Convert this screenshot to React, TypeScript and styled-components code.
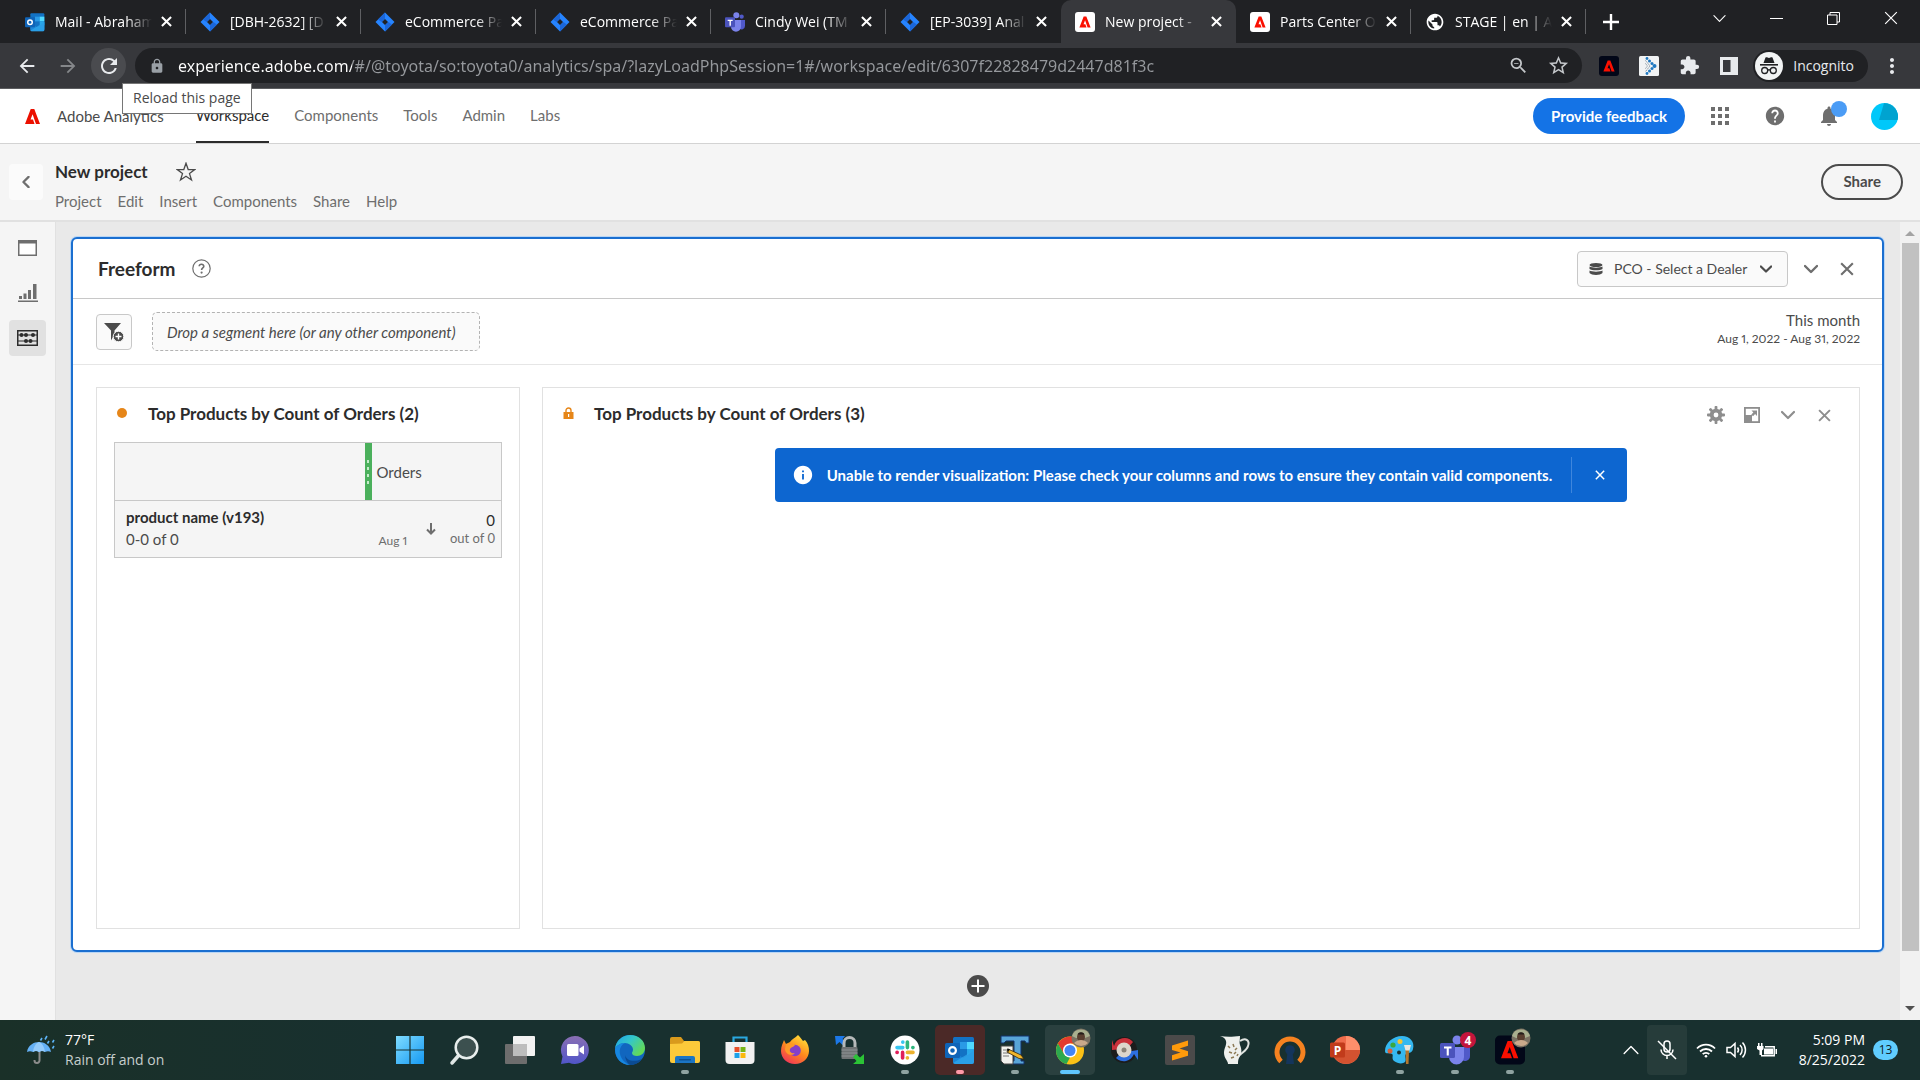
import React from "react";
import styled, { createGlobalStyle, css } from "styled-components";
import {
  MdArrowBack,
  MdArrowForward,
  MdRefresh,
  MdLock,
  MdOutlineZoomOut,
  MdStarBorder,
  MdExtension,
  MdMoreVert,
  MdPublic,
  MdHelp,
  MdNotifications,
  MdInfo,
} from "react-icons/md";

const ui = `"Open Sans", "Noto Sans", sans-serif`;
const brand = `Lato, "Open Sans", sans-serif`;

const GlobalStyle = createGlobalStyle`
  *, *::before, *::after { box-sizing: border-box; }
  body { margin: 0; font-family: ${brand}; color: #2c2c2c; overflow: hidden; }
  button { border: 0; padding: 0; margin: 0; background: none; color: inherit; font: inherit; cursor: pointer; }
  a { color: inherit; text-decoration: none; }
  h1, h2, h3, p, ul { margin: 0; padding: 0; font: inherit; }
  ul { list-style: none; }
  svg { display: block; flex: none; }
`;

const Screen = styled.div`
  display: flex;
  flex-direction: column;
  height: 100vh;
`;

/* ---------- browser chrome ---------- */

const TabStrip = styled.div`
  display: flex;
  align-items: stretch;
  height: 43px;
  padding-left: 11px;
  background: #202124;
  color: #fff;
  font-family: ${ui};
  font-size: 14px;
`;

const Tab = styled.div<{ $active?: boolean; $divider?: boolean }>`
  flex: 0 1 175px;
  min-width: 0;
  display: flex;
  align-items: center;
  padding: 0 12px 0 14px;
  position: relative;
  ${(p) =>
    p.$active &&
    css`
      background: #37383c;
      border-radius: 10px 10px 0 0;
    `}
  &::after {
    content: "";
    display: ${(p) => (p.$divider ? "block" : "none")};
    position: absolute;
    right: 0;
    top: 9px;
    width: 1px;
    height: 25px;
    background: #5f6063;
  }
`;

const TabTitle = styled.a`
  flex: 1;
  min-width: 0;
  margin: 0 4px 0 10px;
  line-height: 20px;
  white-space: nowrap;
  overflow: hidden;
  mask-image: linear-gradient(90deg, #000 calc(100% - 28px), transparent calc(100% - 2px));
`;

const IconButton = styled.button<{ $w?: number; $h?: number; $color?: string }>`
  display: inline-flex;
  align-items: center;
  justify-content: center;
  flex: none;
  width: ${(p) => p.$w ?? 20}px;
  height: ${(p) => p.$h ?? p.$w ?? 20}px;
  color: ${(p) => p.$color ?? "inherit"};
`;

const NewTab = styled(IconButton)`
  margin-left: 11px;
  align-self: center;
`;

const WindowControls = styled.div`
  display: flex;
  margin-left: auto;
  padding-right: 1px;
  align-items: center;
  height: 36px;
`;

const Toolbar = styled.div`
  display: flex;
  align-items: center;
  height: 46px;
  padding: 0 15px 0 9px;
  background: #37383c;
  border-bottom: 1px solid #5c5d60;
  color: #e8eaed;
  font-family: ${ui};
`;

const NavButton = styled(IconButton)<{ $hover?: boolean }>`
  margin-right: 6px;
  border-radius: 50%;
  background: ${(p) => (p.$hover ? "#4a4b4f" : "transparent")};
`;

const AddressBar = styled.div`
  flex: 1;
  display: flex;
  align-items: center;
  height: 35px;
  margin: 0 12px 0 3px;
  padding: 0 10px 0 14px;
  border-radius: 18px;
  background: #202124;
  color: #c4c7ca;
  gap: 13px;
`;

const AddressInput = styled.input`
  flex: 1;
  min-width: 0;
  border: 0;
  padding: 0;
  height: 24px;
  font: 16px "Noto Sans", ${ui};
  color: transparent;
  background: linear-gradient(90deg, #fff 174px, #96999d 174px);
  background-clip: text;
  -webkit-background-clip: text;
`;

const Extensions = styled.div`
  display: flex;
  align-items: center;
  gap: 10px;
`;

const Incognito = styled.button`
  display: flex;
  align-items: center;
  gap: 10px;
  height: 32px;
  margin: 0 11px 0 9px;
  padding: 0 14px 0 2px;
  border-radius: 16px;
  background: #202124;
  font-size: 14px;
`;

const Tooltip = styled.div`
  position: absolute;
  left: 122px;
  top: 83px;
  z-index: 5;
  padding: 4px 10px 5px;
  border: 1px solid #767676;
  background: #fff;
  color: #4a4a4a;
  font: 14px/20px ${ui};
`;

/* ---------- application header ---------- */

const AppHeader = styled.header`
  display: flex;
  align-items: stretch;
  height: 55px;
  padding: 0 22px 0 25px;
  background: #fff;
  border-bottom: 1px solid #d3d3d3;
  font-size: 15px;
`;

const Brand = styled.a`
  display: flex;
  align-items: center;
  gap: 17px;
  margin-right: 32px;
  color: #4b4b4b;
`;

const MainNav = styled.nav`
  display: flex;
  gap: 25px;
`;

const NavLink = styled.a<{ $active?: boolean }>`
  display: flex;
  align-items: center;
  border-bottom: 2px solid ${(p) => (p.$active ? "#2c2c2c" : "transparent")};
  color: ${(p) => (p.$active ? "#2c2c2c" : "#6e6e6e")};
`;

const HeaderActions = styled.div`
  display: flex;
  align-items: center;
  gap: 28px;
  margin-left: auto;
  color: #6e6e6e;
`;

const Feedback = styled.button`
  height: 36px;
  padding: 0 18px;
  margin-right: -7px;
  border-radius: 18px;
  background: #1473e6;
  color: #fff;
  font-weight: 700;
`;

const BellButton = styled(IconButton)`
  position: relative;
  &::after {
    content: "";
    position: absolute;
    left: 15px;
    top: -2px;
    width: 16px;
    height: 16px;
    border-radius: 50%;
    background: #4b9cf5;
  }
`;

const ProjectBar = styled.div`
  display: flex;
  align-items: center;
  height: 78px;
  padding: 0 17px 0 9px;
  background: #f5f5f5;
  border-bottom: 2px solid #e1e1e1;
`;

const BackButton = styled(IconButton)`
  border-radius: 4px;
  background: #fbfbfb;
`;

const ProjectInfo = styled.div`
  display: flex;
  flex-direction: column;
  gap: 8px;
  margin-left: 12px;
  padding-top: 8px;
`;

const ProjectTitle = styled.div`
  display: flex;
  align-items: center;
  gap: 28px;
  h1 { font-size: 17px; line-height: 22px; font-weight: 700; }
`;

const ProjectMenu = styled.nav`
  display: flex;
  gap: 16px;
  font-size: 15px;
  line-height: 20px;
  color: #6e6e6e;
`;

const ShareButton = styled.button`
  height: 36px;
  padding: 0 20px 2px;
  margin-left: auto;
  border: 2px solid #4b4b4b;
  border-radius: 18px;
  color: #4b4b4b;
  font-size: 15px;
  font-weight: 700;
`;

/* ---------- workspace ---------- */

const Workspace = styled.div`
  flex: 1;
  min-height: 0;
  display: flex;
`;

const Rail = styled.aside`
  flex: none;
  width: 56px;
  padding: 8px 9px 0;
  display: flex;
  flex-direction: column;
  gap: 9px;
  background: #f5f5f5;
  border-right: 1px solid #e1e1e1;
  color: #6e6e6e;
`;

const RailButton = styled(IconButton)<{ $active?: boolean }>`
  border-radius: 4px;
  background: ${(p) => (p.$active ? "#e1e1e1" : "transparent")};
`;

const Canvas = styled.main`
  flex: 1;
  min-width: 0;
  display: flex;
  flex-direction: column;
  padding: 15px 16px 0 15px;
  background: #e9e9e9;
`;

const Panel = styled.section`
  flex: 1;
  min-height: 0;
  display: flex;
  flex-direction: column;
  border: 2px solid #1b6fd0;
  border-radius: 6px;
  background: #fff;
  box-shadow: 0 0 0 1px #b9d6f5;
`;

const PanelHeader = styled.div`
  display: flex;
  align-items: center;
  height: 60px;
  padding: 0 25px;
  border-bottom: 1px solid #c8c8c8;
  h2 { font-size: 19px; font-weight: 700; margin-right: 16px; }
`;

const HeaderControls = styled.div`
  display: flex;
  align-items: center;
  gap: 16px;
  margin-left: auto;
  color: #6e6e6e;
`;

const SuitePicker = styled.label`
  display: flex;
  align-items: center;
  height: 36px;
  margin-right: -3px;
  padding: 0 15px 0 11px;
  border: 1px solid #c8c8c8;
  border-radius: 4px;
  background: #fafafa;
  color: #4b4b4b;
  select {
    appearance: none;
    border: 0;
    width: 146px;
    margin-left: 11px;
    padding: 0;
    background: transparent;
    color: inherit;
    font: 14px ${brand};
  }
`;

const SegmentRow = styled.div`
  display: flex;
  align-items: center;
  gap: 20px;
  height: 66px;
  padding: 0 22px 0 23px;
  border-bottom: 1px solid #e6e6e6;
`;

const FilterButton = styled(IconButton)`
  border: 1px solid #c8c8c8;
  border-radius: 4px;
  background: #fafafa;
`;

const DropZone = styled.div`
  display: flex;
  align-items: center;
  height: 39px;
  padding: 0 23px 0 14px;
  border: 1px dashed #b3b3b3;
  border-radius: 5px;
  background: #fafafa;
  color: #4b4b4b;
  font-size: 15px;
  font-style: italic;
`;

const DateRange = styled.button`
  margin-left: auto;
  padding-bottom: 6px;
  text-align: right;
  color: #4b4b4b;
  font-size: 15px;
  line-height: 20px;
  small {
    display: block;
    font-size: 12px;
    line-height: 18px;
    font-variant-numeric: proportional-nums;
  }
`;

const Cards = styled.div`
  flex: 1;
  min-height: 0;
  display: grid;
  grid-template-columns: 424px minmax(0, 1fr);
  gap: 22px;
  padding: 22px 22px 21px 23px;
`;

const Card = styled.article`
  display: flex;
  flex-direction: column;
  border: 1px solid #e1e1e1;
  background: #fff;
`;

const CardHeader = styled.div`
  display: flex;
  align-items: center;
  height: 54px;
  padding: 0 25px 4px 20px;
  h3 { margin-left: 20px; font-size: 17px; font-weight: 700; }
`;

const Dot = styled.span`
  width: 10px;
  height: 10px;
  margin-right: 1px;
  border-radius: 50%;
  background: #e68619;
`;

const CardTools = styled.div`
  display: flex;
  align-items: center;
  gap: 16px;
  margin-left: auto;
  padding-top: 4px;
  color: #8e8e8e;
`;

const DataTable = styled.table`
  width: 388px;
  margin: 0 17px;
  border-collapse: collapse;
  table-layout: fixed;
  background: #f5f5f5;
  color: #4b4b4b;
  font-size: 15px;
  border: 1px solid #c8c8c8;
  tr + tr { border-top: 1px solid #c8c8c8; }
  th, td { height: 57px; padding: 0; text-align: left; font-weight: 400; }
`;

const OrdersHead = styled.div`
  display: flex;
  align-items: center;
  height: 57px;
  gap: 5px;
`;

const ResizeHandle = styled.span`
  display: flex;
  flex-direction: column;
  align-items: center;
  justify-content: center;
  gap: 4px;
  width: 7px;
  height: 100%;
  background: #4bb05c;
  i { width: 2px; height: 3px; background: #c5ecca; }
`;

const DimensionName = styled.div`
  padding: 0 0 2px 11px;
  line-height: 22px;
  strong { display: block; color: #2c2c2c; }
`;

const Totals = styled.div`
  display: flex;
  justify-content: space-between;
  align-items: center;
  height: 36px;
  padding: 0 6px 0 14px;
`;

const StartDate = styled.span`
  align-self: flex-end;
  font-size: 12px;
  line-height: 12px;
  color: #6e6e6e;
  font-variant-numeric: proportional-nums;
`;

const TotalValue = styled.span`
  display: flex;
  align-items: center;
  gap: 14px;
  text-align: right;
  line-height: 17px;
  color: #6e6e6e;
  b { display: block; font-weight: 400; color: #2c2c2c; }
  small { font-size: 13px; }
`;

const Banner = styled.div`
  display: flex;
  align-items: center;
  align-self: center;
  height: 54px;
  margin-top: 6px;
  padding-left: 17px;
  border-radius: 4px;
  background: #0d66d0;
  color: #fff;
  font-size: 15px;
  font-weight: 700;
  p { margin: 0 19px 0 13px; }
`;

const BannerClose = styled.button`
  display: flex;
  align-items: center;
  justify-content: center;
  width: 56px;
  height: 36px;
  border-left: 1px solid #3f86dc;
`;

const AddRow = styled.div`
  flex: none;
  display: flex;
  align-items: center;
  justify-content: center;
  height: 68px;
`;

const ScrollTrack = styled.div`
  flex: none;
  display: flex;
  flex-direction: column;
  align-items: center;
  width: 20px;
  padding: 6px 0;
  background: #f1f1f1;
`;

const ScrollThumb = styled.div`
  flex: 707;
  width: 17px;
  margin: 3px 0;
  background: #c1c1c1;
`;

const ScrollRest = styled.div`
  flex: 48;
`;

/* ---------- taskbar ---------- */

const Taskbar = styled.footer`
  flex: none;
  display: grid;
  grid-template-columns: 1fr auto 1fr;
  align-items: center;
  height: 60px;
  background: linear-gradient(90deg, #1a3028, #18302f 20%, #18302f);
  color: #fff;
  font-family: ${ui};
  font-size: 14px;
`;

const Weather = styled.button`
  display: flex;
  align-items: center;
  gap: 9px;
  padding-left: 26px;
  text-align: left;
  line-height: 20px;
  small { display: block; font-size: 14px; color: #c6cecd; }
`;

const Dock = styled.ul`
  display: flex;
  gap: 5px;
`;

const DockButton = styled.button<{ $tone?: "alert" | "active"; $mark?: "run" | "alert" | "active" }>`
  position: relative;
  display: flex;
  align-items: center;
  justify-content: center;
  width: 50px;
  height: 50px;
  border-radius: 5px;
  background: ${(p) => (p.$tone === "alert" ? "#4b2927" : p.$tone === "active" ? "#2a403f" : "transparent")};
  &::after {
    content: "";
    display: ${(p) => (p.$mark ? "block" : "none")};
    position: absolute;
    bottom: 1px;
    width: ${(p) => (p.$mark === "active" ? 20 : 8)}px;
    height: 4px;
    border-radius: 2px;
    background: ${(p) => (p.$mark === "active" ? "#60c8ff" : p.$mark === "alert" ? "#ff9aa8" : "#8fa3a1")};
  }
`;

const Tray = styled.div`
  display: flex;
  align-items: center;
  justify-content: flex-end;
  padding-right: 22px;
`;

const MicButton = styled(IconButton)`
  margin: 0 9px 0 7px;
  border-radius: 4px;
  background: #263c3a;
`;

const TrayIcons = styled.button`
  display: flex;
  align-items: center;
  gap: 10px;
`;

const Clock = styled.button`
  margin: 0 8px 0 21px;
  text-align: right;
  line-height: 20px;
`;

const Notice = styled.span`
  width: 25px;
  height: 20px;
  border-radius: 10px;
  background: #60cdff;
  color: #10201f;
  font-size: 12px;
  line-height: 20px;
  text-align: center;
`;

/* ---------- drawings ---------- */

const Cross = ({ size = 12, w = 2 }: { size?: number; w?: number }) => (
  <svg width={size} height={size} viewBox="0 0 12 12" fill="none" stroke="currentColor" strokeWidth={w}>
    <path d="M1 1l10 10M11 1L1 11" />
  </svg>
);

const Chevron = ({ size = 14, w = 2.4, dir = 0 }: { size?: number; w?: number; dir?: number }) => (
  <svg width={size} height={size} viewBox="0 0 14 14" fill="none" stroke="currentColor" strokeWidth={w}>
    <path d="M1 4l6 6 6-6" transform={`rotate(${dir} 7 7)`} strokeLinecap="round" strokeLinejoin="round" />
  </svg>
);

const A_MARK = "M6.1 0h3.8L16 16h-4.3L8.1 5.6 5.9 11.3h2.6l1.7 4.7H0z";

const AdobeMark = ({ size = 15 }: { size?: number }) => (
  <svg width={size} height={size} viewBox="0 0 16 16">
    <path d={A_MARK} fill="#eb1000" />
  </svg>
);

const AdobeTile = ({ size = 20, bg = "#fff" }: { size?: number; bg?: string }) => (
  <svg width={size} height={size} viewBox="0 0 20 20">
    <rect width="20" height="20" rx="3" fill={bg} />
    <path d={A_MARK} fill="#fa0f00" transform="translate(4.4 4.4) scale(.7)" />
  </svg>
);

const Jira = () => (
  <svg width="20" height="20" viewBox="0 0 20 20">
    <path d="M10 .5L19.5 10 10 19.5.5 10z" fill="#2684ff" />
    <path d="M10 .5v6.2L6.7 10 3 7.5z" fill="#1b66d8" />
    <path d="M10 19.5v-6.2l3.3-3.3 3.7 2.5z" fill="#1b66d8" />
    <path d="M10 7l3 3-3 3-3-3z" fill="#202124" />
  </svg>
);

const Outlook = ({ size = 20 }: { size?: number }) => (
  <svg width={size} height={size} viewBox="0 0 30 30">
    <rect x="8" y="2" width="21" height="25" rx="1.5" fill="#1272c4" />
    <path d="M15 7h7v7h-7z" fill="#2a9ae6" />
    <path d="M22 7h7v7h-7z" fill="#50d9ff" />
    <path d="M22 14h7v6h-7z" fill="#28a8ea" />
    <path d="M8 17l10.5 6L29 15v12a2 2 0 01-2 2H10a2 2 0 01-2-2z" fill="#1a86d8" />
    <path d="M8 28L29 15v12a2 2 0 01-2 2H10z" fill="#35b1f2" opacity=".6" />
    <rect x="0" y="8" width="15" height="15" rx="1.5" fill="#0f64b8" />
    <circle cx="7.5" cy="15.5" r="3.4" fill="none" stroke="#fff" strokeWidth="2.2" />
  </svg>
);

const Teams = ({ size = 20, count }: { size?: number; count?: number }) => (
  <svg width={size} height={size} viewBox="0 0 30 30" overflow="visible">
    <circle cx="25" cy="7" r="3.2" fill="#5059c9" />
    <path d="M21 12h9v9a5 5 0 01-9 3z" fill="#5059c9" />
    <circle cx="17" cy="5" r="4.5" fill="#7b83eb" />
    <path d="M9 12h15v10a7.500 7.500 0 01-15 0z" fill="#7b83eb" />
    <rect x="0" y="8" width="15" height="15" rx="1.5" fill="#4b53bc" />
    <path d="M4 11.500h7.500v2H8.800v7H6.700v-7H4z" fill="#fff" />
    {count ? (
      <>
        <circle cx="28" cy="5" r="8" fill="#c4153c" />
        <text x="28" y="9.500" fontSize="12" fontWeight="700" fill="#fff" textAnchor="middle">{count}</text>
      </>
    ) : null}
  </svg>
);

const ArrowsExtension = () => (
  <svg width="20" height="20" viewBox="0 0 20 20">
    <rect width="20" height="20" rx="1.5" fill="#f1f3f4" />
    <g fill="#1f78c1">
      <circle cx="8" cy="2.500" r="1.400" />
      <circle cx="10.500" cy="5" r="1.500" />
      <circle cx="13" cy="7.500" r="1.500" />
      <circle cx="15.500" cy="10" r="2" />
      <circle cx="13" cy="12.500" r="1.500" />
      <circle cx="10.500" cy="15" r="1.500" />
      <circle cx="8" cy="17.500" r="1.400" />
    </g>
    <path d="M6.500 4.500L11 10l-4.500 5.500M6.500 7.500L8.500 10l-2 2.500" fill="none" stroke="#7b8a96" strokeDasharray="1.500 1" />
  </svg>
);

const IncognitoFace = () => (
  <svg width="28" height="28" viewBox="0 0 28 28">
    <circle cx="14" cy="14" r="14" fill="#f1f3f4" />
    <path d="M10.500 5.500c1.500-.600 2 .4 3.500.4s2-1 3.500-.4L19.500 11h-11z" fill="#202124" />
    <rect x="5" y="12" width="18" height="1.600" fill="#202124" />
    <g fill="none" stroke="#202124" strokeWidth="1.300">
      <circle cx="9.700" cy="18.500" r="3" />
      <circle cx="18.300" cy="18.500" r="3" />
      <path d="M12.700 18.200c.8-.6 1.800-.6 2.600 0" />
    </g>
  </svg>
);

const AppGrid = () => (
  <svg width="18" height="18" viewBox="0 0 18 18" fill="currentColor">
    {[0, 7, 14].map((y) => [0, 7, 14].map((x) => <rect key={`${x}-${y}`} x={x} y={y} width="4" height="4" />))}
  </svg>
);

const Avatar = () => (
  <svg width="27" height="27" viewBox="0 0 27 27">
    <circle cx="13.500" cy="13.500" r="13.500" fill="#00c8fa" />
    <path d="M13 .2A13.500 13.500 0 0126.600 17L8 17z" fill="#00a3d0" />
  </svg>
);

const Star = () => (
  <svg width="20" height="20" viewBox="0 0 20 20" fill="none" stroke="#4b4b4b" strokeWidth="1.300">
    <path d="M10 1.200l2.200 6.300 6.600.1-5.300 4 2 6.400L10 14.200 4.500 18l2-6.400-5.300-4 6.600-.1z" />
  </svg>
);

const PanelIcon = () => (
  <svg width="19" height="16" viewBox="0 0 19 16">
    <rect x=".75" y=".75" width="17.500" height="14.500" fill="#fff" stroke="#6e6e6e" strokeWidth="1.500" />
    <rect width="19" height="3.500" fill="#6e6e6e" />
  </svg>
);

const BarsIcon = () => (
  <svg width="20" height="18" viewBox="0 0 20 18" fill="#6e6e6e">
    <path d="M1 12h3v3H1zM5.500 9.500h3V15h-3zM10 6h3v9h-3zM15 0h3.500v15H15zM0 16.500h20V18H0z" />
  </svg>
);

const AbacusIcon = () => (
  <svg width="21" height="16" viewBox="0 0 21 16" fill="#2c2c2c">
    <rect x=".75" y=".75" width="19.500" height="14.500" fill="none" stroke="#2c2c2c" strokeWidth="1.500" />
    <path d="M0 4.500h21v1H0zM0 10.500h21v1H0z" />
    <circle cx="4.500" cy="5" r="2" />
    <circle cx="9" cy="5" r="2" />
    <circle cx="16" cy="5" r="2" />
    <circle cx="9" cy="11" r="2" />
    <circle cx="13.500" cy="11" r="2" />
  </svg>
);

const HelpOutline = () => (
  <svg width="19" height="19" viewBox="0 0 19 19">
    <circle cx="9.500" cy="9.500" r="8.700" fill="none" stroke="#6e6e6e" strokeWidth="1.200" />
    <path d="M7.200 7.200c.2-2.600 4.700-2.500 4.600.2-.1 1.500-2.200 1.700-2.200 3.600" fill="none" stroke="#6e6e6e" strokeWidth="1.600" />
    <circle cx="9.600" cy="13.600" r="1.100" fill="#6e6e6e" />
  </svg>
);

const DatabaseIcon = () => (
  <svg width="14" height="12" viewBox="0 0 14 12" fill="#4b4b4b">
    <ellipse cx="7" cy="2" rx="6.500" ry="2" />
    <path d="M.5 3.500c2 1.500 11 1.500 13 0V6c-2 1.700-11 1.700-13 0zM.5 7.500c2 1.500 11 1.500 13 0V10c-2 2.500-11 2.500-13 0z" />
  </svg>
);

const FilterAdd = () => (
  <svg width="20" height="20" viewBox="0 0 20 20">
    <path d="M0 1h17l-6.500 7.500V12L7 18.500V8.500z" fill="#4b4b4b" />
    <circle cx="14.500" cy="14.500" r="5.300" fill="#4b4b4b" stroke="#fafafa" />
    <path d="M14.500 11.500v6M11.500 14.500h6" stroke="#fff" strokeWidth="1.400" />
  </svg>
);

const OrangeLock = () => (
  <svg width="11" height="12" viewBox="0 0 11 12">
    <path d="M3 6V3.500a2.500 2.500 0 015 0V6" fill="none" stroke="#e68619" strokeWidth="1.400" />
    <rect x=".5" y="5" width="10" height="7" fill="#e68619" />
    <path d="M5 7h1.200v3H5z" fill="#fff" />
  </svg>
);

const Gear = () => (
  <svg width="18" height="18" viewBox="0 0 18 18">
    <circle cx="9" cy="9" r="4.300" fill="none" stroke="currentColor" strokeWidth="3.800" />
    {[0, 45, 90, 135, 180, 225, 270, 315].map((a) => (
      <rect key={a} x="7.600" y="0" width="2.800" height="4" rx=".8" fill="currentColor" transform={`rotate(${a} 9 9)`} />
    ))}
  </svg>
);

const Expand = () => (
  <svg width="16" height="16" viewBox="0 0 16 16">
    <rect x=".9" y=".9" width="14.200" height="14.200" fill="none" stroke="currentColor" strokeWidth="1.800" />
    <rect x="1" y="8" width="7" height="7" fill="currentColor" />
    <path d="M7.500 3.500H13V9l-1.900-1.900L9 9.200 7.300 7.500l2.100-2.100z" fill="currentColor" />
  </svg>
);

const DownArrow = () => (
  <svg width="10" height="12" viewBox="0 0 10 12" fill="none" stroke="#6e6e6e" strokeWidth="2">
    <path d="M5 0v10.500M1 6.500l4 4 4-4" />
  </svg>
);

const AddCircle = () => (
  <svg width="22" height="22" viewBox="0 0 22 22">
    <circle cx="11" cy="11" r="11" fill="#4b4b4b" />
    <path d="M11 4.500v13M4.500 11h13" stroke="#fff" strokeWidth="2" />
  </svg>
);

const Triangle = ({ up }: { up?: boolean }) => (
  <svg width="10" height="12" viewBox="0 0 10 12">
    <path d={up ? "M0 8l5-5 5 5z" : "M0 4l5 5 5-5z"} fill={up ? "#a3a3a3" : "#505050"} />
  </svg>
);

const Umbrella = () => (
  <svg width="30" height="30" viewBox="0 0 30 30" fill="none">
    <path d="M13 15v10.500a2.500 2.500 0 01-5 0V25" stroke="#8c8c8c" strokeWidth="2" transform="translate(.5 0)" />
    <path d="M1 17C2 10 8 7 13 7s11 3 12 10c-2-1-4-1-6 0-2-1.500-4-1.500-6 0-2-1.500-4-1.500-6 0-2-1-4-1-6 0z" fill="#64b0f5" />
    <path d="M7 17c.5-5 3-9 6-10 3 1 5.500 5 6 10-2-1.500-4-1.500-6 0-2-1.500-4-1.500-6 0z" fill="#94cbfb" />
    <path d="M16 3l-1.500 2.500M21 1l-2 3.500M23 6l-1.500 2.500M28 5l-1.500 2.500M28 11l-1.500 2.500" stroke="#5db4f7" strokeWidth="1.600" />
  </svg>
);

const Face = () => (
  <g transform="translate(22 -7)">
    <circle cx="9" cy="9" r="9.500" fill="#7b7263" />
    <path d="M0 7a9.500 9.500 0 0118 0l-5 2H4z" fill="#a9b08f" />
    <ellipse cx="9" cy="8" rx="4" ry="4.500" fill="#5a3f30" />
    <path d="M2 14c4-4 10-4 14 0a9.500 9.500 0 01-14 0z" fill="#c9a98b" />
    <path d="M5.500 5.500c1-3 6-3 7 0z" fill="#241d1a" />
  </g>
);

const Art = ({ children }: { children: React.ReactNode }) => (
  <svg width="30" height="30" viewBox="0 0 30 30" overflow="visible">
    {children}
  </svg>
);

const StartArt = (
  <Art>
    <defs>
      <linearGradient id="win" x1="0" y1="0" x2="1" y2="1">
        <stop offset="0" stopColor="#7fdcff" />
        <stop offset="1" stopColor="#1599f3" />
      </linearGradient>
    </defs>
    <path d="M1 1h13.400v13.400H1zM15.600 1H29v13.400H15.600zM1 15.600h13.400V29H1zM15.600 15.600H29V29H15.600z" fill="url(#win)" />
  </Art>
);

const SearchArt = (
  <Art>
    <path d="M9 20l-7 8" stroke="#dfe6e5" strokeWidth="3.500" strokeLinecap="round" />
    <circle cx="16.500" cy="12.500" r="10.800" fill="#3c504f" stroke="#e8eeed" strokeWidth="2.500" />
  </Art>
);

const TaskViewArt = (
  <Art>
    <rect x="0" y="9" width="22" height="20" rx="1" fill="#6d6d6d" />
    <rect x="8" y="1" width="22" height="20" rx="1" fill="#f2f2f2" />
    <rect x="8" y="9" width="14" height="12" fill="#bdbdbd" />
  </Art>
);

const ChatArt = (
  <Art>
    <defs>
      <linearGradient id="chat" x1="0" y1="0" x2="0" y2="1">
        <stop offset="0" stopColor="#8a6fb3" />
        <stop offset="1" stopColor="#5055c9" />
      </linearGradient>
    </defs>
    <path d="M15 1a14 14 0 11-6 26.700L1 29l1.500-7.500A14 14 0 0115 1z" fill="url(#chat)" />
    <rect x="7" y="9" width="11.500" height="12" rx="1.500" fill="#fff" />
    <path d="M19.500 13.500l4.500-3v9l-4.500-3z" fill="#fff" />
  </Art>
);

const EdgeArt = (
  <Art>
    <defs>
      <linearGradient id="edgeTop" x1="0" y1="0" x2="1" y2=".6">
        <stop offset="0" stopColor="#1fa3e8" />
        <stop offset=".5" stopColor="#34c7c9" />
        <stop offset="1" stopColor="#63d957" />
      </linearGradient>
    </defs>
    <circle cx="15" cy="15" r="15" fill="#1166bf" />
    <path d="M0 14C1 5 8 0 15 0c9 0 15 6 15 13 0 5-4 8-8 8-3 0-5-1-5-3 0-1 1-1.500 1-3.500C18 11 14 8 10 8 5 8 1 11 0 14z" fill="url(#edgeTop)" />
    <path d="M0 14c1-3 5-6 10-6-4 2-6 6-5 11 1 5 5 9 10 11C6 30 0 23 0 14z" fill="#1787e0" />
    <path d="M10 20c1 5 8 8 17 4-3 4-7 6-12 6-3-2-5-6-5-10z" fill="#0b4b93" />
  </Art>
);

const FolderArt = (
  <Art>
    <path d="M0 4a2 2 0 012-2h9l3 4h14a2 2 0 012 2v6H0z" fill="#d99a1c" />
    <path d="M0 9l12-.5L14.500 6H28a2 2 0 012 2v18a2 2 0 01-2 2H2a2 2 0 01-2-2z" fill="#fcc93a" />
    <path d="M5 28v-5a2 2 0 012-2h16a2 2 0 012 2v5z" fill="#1b75c4" />
    <rect x="9" y="24" width="12" height="1.500" rx=".7" fill="#0e5292" />
  </Art>
);

const StoreArt = (
  <Art>
    <path d="M8.500 8V2.500h13V8" fill="none" stroke="#2aa8e0" strokeWidth="2.200" />
    <path d="M.5 7h29v18a4 4 0 01-4 4h-21a4 4 0 01-4-4z" fill="#f1f1f1" />
    <path d="M9.500 12h5v5h-5z" fill="#e8502a" />
    <path d="M15.500 12h5v5h-5z" fill="#77b516" />
    <path d="M9.500 18h5v5h-5z" fill="#1ca0e8" />
    <path d="M15.500 18h5v5h-5z" fill="#fbb90c" />
  </Art>
);

const FirefoxArt = (
  <Art>
    <defs>
      <linearGradient id="fox" x1=".8" y1="0" x2=".2" y2="1">
        <stop offset="0" stopColor="#ffe53b" />
        <stop offset=".5" stopColor="#ff8a1c" />
        <stop offset="1" stopColor="#f0305c" />
      </linearGradient>
    </defs>
    <path d="M18 0c3 3 4 5 5 6l2-1c3 3 4 7 4 11 0 7-6 13-14 13S1 23 1 16c0-5 2-8 3-11l2 4 4-2c2-3 5-4 8-7z" fill="url(#fox)" />
    <circle cx="15" cy="15.500" r="5.800" fill="#8440c9" />
    <path d="M6 9c4-1 6 1 9 1-1 2-4 2-5 4-1 3 2 5 5 4-3 4-10 1-10-4z" fill="#ff9a28" />
  </Art>
);

const KeyLockArt = (
  <Art>
    <path d="M0 1h10L7.500 4l3 3-3 3-3-3L1 10z" fill="#1c78e8" />
    <path d="M9 13V8a5.500 5.500 0 0111 0v5" fill="none" stroke="#b5b9ba" strokeWidth="3" />
    <rect x="6.500" y="12" width="16" height="12" rx="1" fill="#6f7374" />
    <path d="M6.500 15h16M6.500 18h16M6.500 21h16" stroke="#8f9495" />
    <path d="M29 29H18l3.500-3-3.500-4 3-3 4 3.500 4-3.500z" fill="#2bc336" />
  </Art>
);

const SlackArt = (
  <Art>
    <circle cx="15" cy="15" r="14.500" fill="#fff" />
    <g strokeWidth="3.600" strokeLinecap="round" fill="none">
      <path d="M12.800 7v.2M7 12.600h5.800" stroke="#36c5f0" />
      <path d="M17.400 7v5.600M23 12.600h-.2" stroke="#2eb67d" />
      <path d="M17.400 17.400H23M17.400 23v-.2" stroke="#ecb22e" />
      <path d="M12.600 17.400V23M7 17.400h.2" stroke="#e01e5a" />
    </g>
  </Art>
);

const TextpadArt = (
  <Art>
    <path d="M1 1h28v7h-3l-1-2h-4v20h3v3H12v-3h2V6H6L4 8H1z" fill="#58a5d8" stroke="#12306b" />
    <path d="M1 11h12v18H4l-3-3z" fill="#f2f2ee" stroke="#444" />
    <path d="M3 15h6M3 18h8M3 21h6" stroke="#777" />
    <path d="M8 14l13 6 3 4-5-.5L7 17z" fill="#f0b62c" stroke="#33260c" strokeWidth=".8" />
    <path d="M7 13.500l3 .8-2 2.900z" fill="#111" />
  </Art>
);

const ChromeArt = (
  <Art>
    <circle cx="15" cy="15.500" r="14" fill="#fbc116" />
    <path d="M2.900 8.500A14 14 0 0127.100 8.500L15 8.500l-6 10.500z" fill="#e33b2e" />
    <path d="M2.900 8.500L9 19l6 3.500-3.500 6.600A14 14 0 012.900 8.500z" fill="#2da94f" />
    <circle cx="15" cy="15.500" r="7" fill="#fff" />
    <circle cx="15" cy="15.500" r="5.500" fill="#4285f4" />
    <g transform="translate(-5 1)"><Face /></g>
  </Art>
);

const SyncArt = (
  <Art>
    <circle cx="14" cy="15" r="13" fill="#1c1c1c" />
    <path d="M4 11A11 11 0 0123 7l-3 3.500a7 7 0 00-10 2l3 1.500-11 1V5z" fill="#c9303a" />
    <path d="M24 19A11 11 0 016 23l3-3a7 7 0 009-1l-2-2 12-2v10z" fill="#2d6fe0" />
    <circle cx="14" cy="15" r="7.500" fill="#ddd6cc" />
    <circle cx="14" cy="15" r="2.500" fill="#8b8378" />
  </Art>
);

const SublimeArt = (
  <Art>
    <rect width="30" height="30" rx="2" fill="#4b4a4a" />
    <path d="M7 10.500L23 5.500v5.200l-8.500 2.800 8.500 2.700v4.500L7 25.500v-5.300l8.500-2.700L7 15z" fill="#ff9a0b" />
  </Art>
);

const JugArt = (
  <Art>
    <path d="M20 6c6-4 10 0 8 5-1 4-5 6-8 9" fill="none" stroke="#dfe3e0" strokeWidth="2" />
    <path d="M0 1c6 1 12 1 20 0 0 4-1 6 0 9 2 5 2 9-1 13-1 2-1 4-1 6H8c0-3-4-6-4-11 0-5 3-8 2-12C5 3 3 2 0 1z" fill="#eef0ed" />
    <path d="M8 11l2 2M13 9l1 3M17 13l-2 2M9 17l3 1M14 19l2-2M11 23l3-1M17 21l1-2" stroke="#8d7a55" strokeWidth="1.500" />
  </Art>
);

const VpnArt = (
  <Art>
    <path d="M6 26.500A13 13 0 1124 26.500" fill="none" stroke="#f58220" strokeWidth="5" />
    <circle cx="15" cy="15" r="4.800" fill="#14355c" />
    <path d="M12.500 17h5l1.500 12h-8z" fill="#14355c" />
  </Art>
);

const PowerPointArt = (
  <Art>
    <circle cx="16" cy="15" r="14" fill="#ef6c4b" />
    <path d="M16 1a14 14 0 0114 14H16z" fill="#ff8f6b" />
    <path d="M2.500 18.500L16 15h14a14 14 0 01-27.500 3.500z" fill="#d35230" />
    <rect x="0" y="7.500" width="15" height="15" rx="1.500" fill="#c13b1b" />
    <text x="7.500" y="19.500" fontSize="12" fontWeight="700" fill="#fff" textAnchor="middle">P</text>
  </Art>
);

const PaintArt = (
  <Art>
    <path d="M17 1c8 0 13 6 11 13-1 5-5 3-7 5s1 5-1 8c-2 2-7 2-11-1-3-3 0-6-2-7-2-2-7 1-7-3C0 8 8 1 17 1z" fill="#35b8f0" />
    <circle cx="8" cy="10" r="2.600" fill="#3aa83e" />
    <circle cx="15" cy="6.500" r="2.500" fill="#f5c433" />
    <circle cx="5" cy="16" r="2.500" fill="#d9623a" />
    <circle cx="14" cy="17.500" r="2" fill="#18302f" />
    <path d="M20.500 15h3.500l-.5 14h-2.500z" fill="#b3772e" />
    <path d="M19 10h7l-1.500 5.500h-4z" fill="#e9e4dc" />
  </Art>
);

const AdobeArt = (
  <Art>
    <rect y=".5" width="30" height="29" rx="5" fill="#020718" />
    <path d={A_MARK} fill="#fa0f00" transform="translate(6 6) scale(1.080)" />
    <g transform="translate(-5 1)"><Face /></g>
  </Art>
);

/* ---------- data ---------- */

const tabs = [
  { title: "Mail - Abraham", icon: <Outlook />, divider: true },
  { title: "[DBH-2632] [D", icon: <Jira />, divider: true },
  { title: "eCommerce Pa", icon: <Jira />, divider: true },
  { title: "eCommerce Pa", icon: <Jira />, divider: true },
  { title: "Cindy Wei (TM", icon: <Teams />, divider: true },
  { title: "[EP-3039] Anal", icon: <Jira /> },
  { title: "New project -", icon: <AdobeTile />, active: true },
  { title: "Parts Center O", icon: <AdobeTile />, divider: true },
  { title: "STAGE | en | Al", icon: <MdPublic size={20} />, divider: true },
];

const dock: { name: string; art: React.ReactNode; tone?: "alert" | "active"; mark?: "run" | "alert" | "active" }[] = [
  { name: "Start", art: StartArt },
  { name: "Search", art: SearchArt },
  { name: "Task view", art: TaskViewArt },
  { name: "Chat", art: ChatArt },
  { name: "Edge", art: EdgeArt },
  { name: "File Explorer", art: FolderArt, mark: "run" },
  { name: "Store", art: StoreArt },
  { name: "Firefox", art: FirefoxArt },
  { name: "WinSCP", art: KeyLockArt },
  { name: "Slack", art: SlackArt, mark: "run" },
  { name: "Outlook", art: <Outlook size={30} />, tone: "alert", mark: "alert" },
  { name: "TextPad", art: TextpadArt, mark: "run" },
  { name: "Chrome", art: ChromeArt, tone: "active", mark: "active" },
  { name: "Backup", art: SyncArt },
  { name: "Sublime Text", art: SublimeArt },
  { name: "Charles", art: JugArt },
  { name: "OpenVPN", art: VpnArt },
  { name: "PowerPoint", art: PowerPointArt },
  { name: "Paint", art: PaintArt, mark: "run" },
  { name: "Teams", art: <Teams size={30} count={4} />, mark: "run" },
  { name: "Adobe Analytics", art: AdobeArt, mark: "run" },
];

const stroke = { fill: "none", stroke: "currentColor", strokeWidth: 1.5 };

export default function App() {
  return (
    <Screen>
      <GlobalStyle />
      <TabStrip>
        {tabs.map((t, i) => (
          <Tab key={i} $active={t.active} $divider={t.divider}>
            {t.icon}
            <TabTitle href="#">{t.title}</TabTitle>
            <IconButton $w={16} aria-label="Close tab"><Cross size={11} w={2.2} /></IconButton>
          </Tab>
        ))}
        <NewTab $w={28} aria-label="New tab">
          <svg width="16" height="16" viewBox="0 0 16 16"><path d="M8 0v16M0 8h16" stroke="#fff" strokeWidth="2.400" /></svg>
        </NewTab>
        <WindowControls>
          <IconButton $w={57} $h={36} aria-label="Search tabs"><Chevron size={13} w={1.2} /></IconButton>
          <IconButton $w={57} $h={36} aria-label="Minimize"><svg width="13" height="13" viewBox="0 0 13 13"><path d="M0 6.500h13" {...stroke} strokeWidth="1" /></svg></IconButton>
          <IconButton $w={57} $h={36} aria-label="Restore">
            <svg width="13" height="13" viewBox="0 0 13 13"><path d="M.5 3h9.500v9.500H.5zM3 3V.5h9.500V10H10" {...stroke} strokeWidth="1" /></svg>
          </IconButton>
          <IconButton $w={57} $h={36} aria-label="Close"><Cross size={14} w={1} /></IconButton>
        </WindowControls>
      </TabStrip>

      <Toolbar>
        <NavButton $w={35} aria-label="Back"><MdArrowBack size={22} /></NavButton>
        <NavButton $w={35} $color="#85878a" aria-label="Forward"><MdArrowForward size={22} /></NavButton>
        <NavButton $w={35} $hover aria-label="Reload"><MdRefresh size={24} /></NavButton>
        <AddressBar>
          <MdLock size={16} color="#9aa0a6" />
          <AddressInput
            aria-label="Address"
            defaultValue="experience.adobe.com/#/@toyota/so:toyota0/analytics/spa/?lazyLoadPhpSession=1#/workspace/edit/6307f22828479d2447d81f3c"
          />
          <IconButton $w={27} aria-label="Zoom"><MdOutlineZoomOut size={21} /></IconButton>
          <IconButton $w={27} aria-label="Bookmark"><MdStarBorder size={23} /></IconButton>
        </AddressBar>
        <Extensions>
          <IconButton $w={30} aria-label="Adobe extension"><AdobeTile bg="#020718" /></IconButton>
          <IconButton $w={30} aria-label="Data extension"><ArrowsExtension /></IconButton>
          <IconButton $w={30} aria-label="Extensions"><MdExtension size={21} /></IconButton>
          <IconButton $w={30} aria-label="Side panel">
            <svg width="18" height="18" viewBox="0 0 18 18"><path d="M0 0h18v18H0zM3 3v12h7.500V3z" fill="#e8eaed" fillRule="evenodd" /></svg>
          </IconButton>
        </Extensions>
        <Incognito><IncognitoFace />Incognito</Incognito>
        <IconButton $w={26} aria-label="Menu"><MdMoreVert size={24} /></IconButton>
      </Toolbar>
      <Tooltip role="tooltip">Reload this page</Tooltip>

      <AppHeader>
        <Brand href="#"><AdobeMark />Adobe Analytics</Brand>
        <MainNav>
          <NavLink href="#" $active>Workspace</NavLink>
          <NavLink href="#">Components</NavLink>
          <NavLink href="#">Tools</NavLink>
          <NavLink href="#">Admin</NavLink>
          <NavLink href="#">Labs</NavLink>
        </MainNav>
        <HeaderActions>
          <Feedback>Provide feedback</Feedback>
          <IconButton $w={28} aria-label="Apps"><AppGrid /></IconButton>
          <IconButton $w={26} aria-label="Help"><MdHelp size={22} /></IconButton>
          <BellButton $w={26} aria-label="Notifications"><MdNotifications size={24} /></BellButton>
          <IconButton $w={28} aria-label="Account"><Avatar /></IconButton>
        </HeaderActions>
      </AppHeader>

      <ProjectBar>
        <BackButton $w={34} $h={36} $color="#6e6e6e" aria-label="Back to projects"><Chevron size={12} w={2.6} dir={90} /></BackButton>
        <ProjectInfo>
          <ProjectTitle>
            <h1>New project</h1>
            <IconButton aria-label="Favorite"><Star /></IconButton>
          </ProjectTitle>
          <ProjectMenu>
            {["Project", "Edit", "Insert", "Components", "Share", "Help"].map((m) => (
              <a key={m} href="#">{m}</a>
            ))}
          </ProjectMenu>
        </ProjectInfo>
        <ShareButton>Share</ShareButton>
      </ProjectBar>

      <Workspace>
        <Rail>
          <RailButton $w={37} $h={36} aria-label="Panels"><PanelIcon /></RailButton>
          <RailButton $w={37} $h={36} aria-label="Visualizations"><BarsIcon /></RailButton>
          <RailButton $w={37} $h={36} $active aria-label="Components"><AbacusIcon /></RailButton>
        </Rail>
        <Canvas>
          <Panel>
            <PanelHeader>
              <h2>Freeform</h2>
              <IconButton aria-label="Help"><HelpOutline /></IconButton>
              <HeaderControls>
                <SuitePicker>
                  <DatabaseIcon />
                  <select aria-label="Report suite"><option>PCO - Select a Dealer</option></select>
                  <Chevron size={12} w={2.6} />
                </SuitePicker>
                <IconButton aria-label="Collapse panel"><Chevron /></IconButton>
                <IconButton aria-label="Remove panel"><Cross size={14} w={1.8} /></IconButton>
              </HeaderControls>
            </PanelHeader>
            <SegmentRow>
              <FilterButton $w={36} $h={36} aria-label="Add filter"><FilterAdd /></FilterButton>
              <DropZone>Drop a segment here (or any other component)</DropZone>
              <DateRange>This month<small>Aug 1, 2022 - Aug 31, 2022</small></DateRange>
            </SegmentRow>
            <Cards>
              <Card>
                <CardHeader><Dot /><h3>Top Products by Count of Orders (2)</h3></CardHeader>
                <DataTable>
                  <colgroup><col width="250" /><col /></colgroup>
                  <tbody>
                    <tr>
                      <th aria-label="Dimension" />
                      <th scope="col">
                        <OrdersHead><ResizeHandle><i /><i /><i /><i /></ResizeHandle>Orders</OrdersHead>
                      </th>
                    </tr>
                    <tr>
                      <th scope="row"><DimensionName><strong>product name (v193)</strong>0-0 of 0</DimensionName></th>
                      <td>
                        <Totals>
                          <StartDate>Aug 1</StartDate>
                          <TotalValue><DownArrow /><span><b>0</b><small>out of 0</small></span></TotalValue>
                        </Totals>
                      </td>
                    </tr>
                  </tbody>
                </DataTable>
              </Card>
              <Card>
                <CardHeader>
                  <OrangeLock />
                  <h3>Top Products by Count of Orders (3)</h3>
                  <CardTools>
                    <IconButton aria-label="Settings"><Gear /></IconButton>
                    <IconButton aria-label="Expand"><Expand /></IconButton>
                    <IconButton aria-label="Collapse"><Chevron w={2.2} /></IconButton>
                    <IconButton aria-label="Remove"><Cross size={13} w={1.8} /></IconButton>
                  </CardTools>
                </CardHeader>
                <Banner role="alert">
                  <MdInfo size={22} />
                  <p>Unable to render visualization: Please check your columns and rows to ensure they contain valid components.</p>
                  <BannerClose aria-label="Dismiss"><Cross size={10} w={1.8} /></BannerClose>
                </Banner>
              </Card>
            </Cards>
          </Panel>
          <AddRow><IconButton $w={22} aria-label="Add panel"><AddCircle /></IconButton></AddRow>
        </Canvas>
        <ScrollTrack>
          <Triangle up />
          <ScrollThumb />
          <ScrollRest />
          <Triangle />
        </ScrollTrack>
      </Workspace>

      <Taskbar>
        <Weather><Umbrella /><span>77°F<small>Rain off and on</small></span></Weather>
        <Dock>
          {dock.map((d) => (
            <li key={d.name}><DockButton aria-label={d.name} $tone={d.tone} $mark={d.mark}>{d.art}</DockButton></li>
          ))}
        </Dock>
        <Tray>
          <IconButton $w={18} aria-label="Hidden icons"><Chevron size={16} w={1.2} dir={180} /></IconButton>
          <MicButton $w={40} $h={50} aria-label="Microphone muted">
            <svg width="20" height="20" viewBox="0 0 20 20" {...stroke}>
              <rect x="7" y="1" width="6" height="11" rx="3" />
              <path d="M4 9.500a6 6 0 0012 0M10 15.500V19M1 1l18 18" />
            </svg>
          </MicButton>
          <TrayIcons aria-label="Network, volume, battery">
            <svg width="20" height="16" viewBox="0 0 20 16" {...stroke} strokeWidth="1.800">
              <path d="M1 6.500a12.500 12.500 0 0118 0M4 9.500a8.500 8.500 0 0112 0M6.700 12.200a4.600 4.600 0 016.600 0" />
              <circle cx="10" cy="14.300" r="1.300" fill="currentColor" stroke="none" />
            </svg>
            <svg width="21" height="18" viewBox="0 0 21 18" {...stroke}>
              <path d="M1 6.500h3.500L9 2.500v13l-4.500-4H1zM11.500 6.500a4 4 0 010 5M14 4a7 7 0 010 10M16.500 1.500a11 11 0 010 15" />
            </svg>
            <svg width="21" height="17" viewBox="0 0 21 17">
              <path d="M1 1h1.500v3H4V1h1.500v3h1v3L5 8.500V13H2.500V8.500L0 7V4h1z" fill="#fff" />
              <path d="M8 4.800h9.200v9H4" {...stroke} />
              <path d="M7 6.500h9v6H7zM18.500 7h1.500v5h-1.500z" fill="#fff" />
            </svg>
          </TrayIcons>
          <Clock>5:09 PM<br />8/25/2022</Clock>
          <Notice>13</Notice>
        </Tray>
      </Taskbar>
    </Screen>
  );
}
